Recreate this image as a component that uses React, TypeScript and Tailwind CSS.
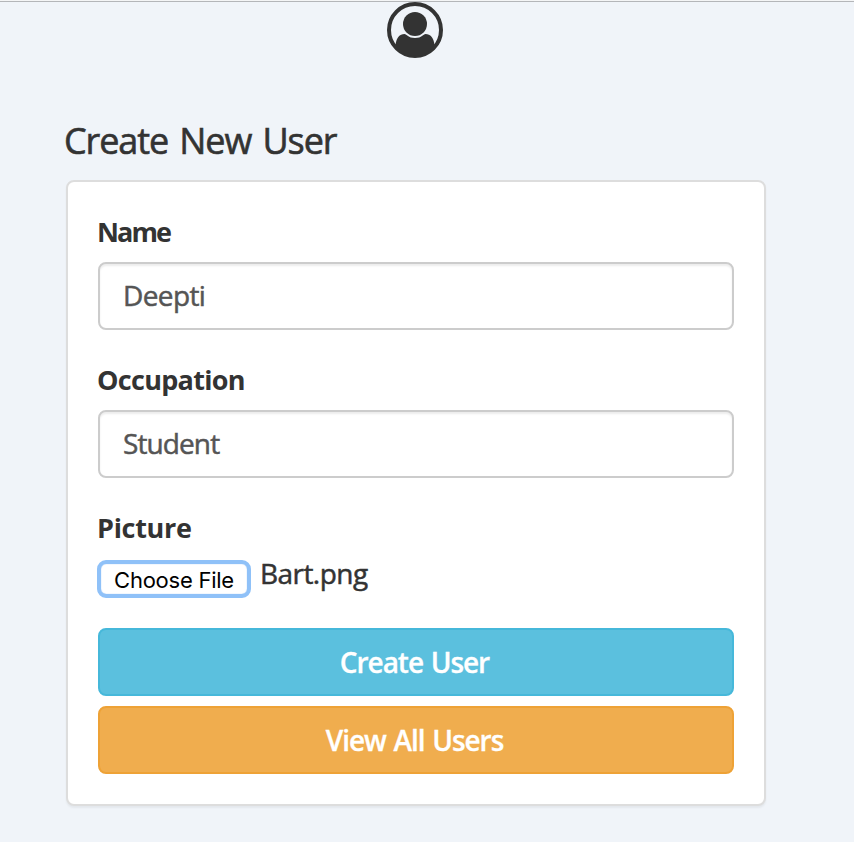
import React from "react";

function UserIcon() {
  return (
    <svg viewBox="0 0 56 56" className="block h-14 w-14" aria-hidden="true">
      <circle cx="28" cy="28" r="26" fill="none" stroke="#333333" strokeWidth="4" />
      <circle cx="28" cy="22" r="12" fill="#333333" />
      <path
        d="M8.500 43C9.500 35.500 12.500 32 17.500 32c2.200 0 3.600 4 10.500 4s8.300-4 10.500-4c5 0 8 3.500 9 11C43 50 36.500 54 28 54S13 50 8.500 43Z"
        fill="#333333"
      />
    </svg>
  );
}

function Field({ label, value, spacing, labelSpacing }: { label: string; value: string; spacing: string; labelSpacing: string }) {
  return (
    <div className="mb-[30px]">
      <label className={`-ml-px mb-[10px] block h-10 text-[27px] leading-10 font-bold ${labelSpacing}`}>{label}</label>
      <input
        defaultValue={value}
        className={`block h-[68px] w-full rounded-lg border-2 border-[#cccccc] bg-white px-[23px] pb-[3px] text-[28px] text-[#555555] shadow-[inset_0_2px_2px_rgba(0,0,0,0.075)] outline-none [-webkit-text-stroke:0.5px_#555555] ${spacing}`}
      />
    </div>
  );
}

export default function App() {
  return (
    <div className="h-[842px] w-full overflow-hidden border-t border-[#f4f5f6] bg-[#f0f4f9] font-['Trebuchet_MS','Open_Sans',sans-serif] text-[#333333]">
      <div className="h-px bg-[#b4b6b9]" />
      <div className="ml-[65px] w-[700px]">
        <div className="flex justify-center">
          <UserIcon />
        </div>
        <h1 className="-ml-px mt-[61px] h-[61px] text-[36px] leading-[44px] tracking-[-1.1px] whitespace-nowrap [word-spacing:3px] [-webkit-text-stroke:0.6px_#333333]">
          Create New User
        </h1>
        <form
          onSubmit={(e) => e.preventDefault()}
          className="ml-px h-[626px] w-[700px] rounded-lg border-2 border-[#dddddd] bg-white px-[30px] pt-[30px] shadow-[0_2px_2px_rgba(0,0,0,0.05)]"
        >
          <Field label="Name" value="Deepti" labelSpacing="tracking-[-1.9px]" spacing="tracking-[-0.6px]" />
          <Field label="Occupation" value="Student" labelSpacing="tracking-[-0.7px]" spacing="tracking-[-0.9px]" />
          <div className="-ml-px h-10 text-[27px] leading-10 font-bold tracking-[-0.3px]">Picture</div>
          <div className="mt-3 flex h-[38px] items-start">
            <button
              type="button"
              className="-ml-px h-[38px] w-[154px] shrink-0 rounded-[9px] border-4 border-[#8fc1f8] bg-white pt-[2px] font-['Inter',sans-serif] text-[22px] leading-[28px] tracking-[-0.25px] whitespace-nowrap text-black shadow-[inset_0_0_1px_#6fa8ee]"
            >
              Choose File
            </button>
            <span className="-mt-px ml-[9px] text-[28px] leading-[28px] tracking-[-0.55px] [-webkit-text-stroke:0.5px_#333333]">Bart.png</span>
          </div>
          <button
            type="button"
            className="mt-[30px] block h-[68px] w-full rounded-lg border-2 border-[#46b8da] bg-[#5bc0de] pr-[3px] text-[28px] leading-[60px] font-semibold tracking-[-1.05px] text-white [word-spacing:1.5px] [-webkit-text-stroke:0.3px_white]"
          >
            Create User
          </button>
          <button
            type="button"
            className="mt-[10px] block h-[68px] w-full rounded-lg border-2 border-[#eea236] bg-[#f0ad4e] pr-[3px] text-[28px] leading-[60px] font-semibold tracking-[-1.05px] text-white [word-spacing:1.5px] [-webkit-text-stroke:0.3px_white]"
          >
            View All Users
          </button>
        </form>
      </div>
    </div>
  );
}
